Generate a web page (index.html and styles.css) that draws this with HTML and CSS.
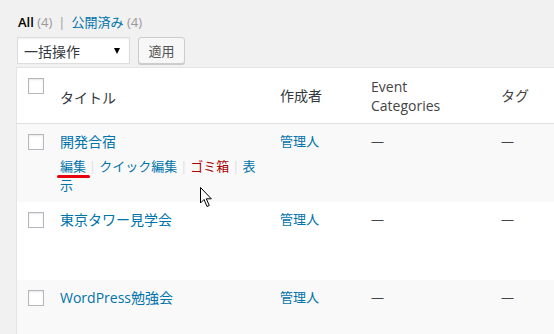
FILE: index.html
```html
<!DOCTYPE html>
<html lang="ja">
<head>
    <meta charset="UTF-8">
    <meta name="viewport" content="width=device-width, initial-scale=1.0">
    <title>投稿一覧</title>
    <link rel="stylesheet" href="styles.css">
</head>
<body>
    <div class="wrap">
        <ul class="subsubsub">
            <li class="current">All <span class="count">(4)</span></li>
            <li class="sep">|</li>
            <li><a href="#">公開済み</a> <span class="count">(4)</span></li>
        </ul>

        <div class="tablenav">
            <div class="bulk-select">
                <span>一括操作</span>
                <span class="arrow"></span>
            </div>
            <button class="button">適用</button>
        </div>

        <div class="posts">
            <div class="row head">
                <div class="cb"><span class="check"></span></div>
                <div class="col-title">タイトル</div>
                <div class="col-author">作成者</div>
                <div class="col-event">Event<br>Categories</div>
                <div class="col-tags">タグ</div>
            </div>

            <div class="row alt">
                <div class="cb"><span class="check"></span></div>
                <div class="col-title">
                    <a class="row-title" href="#">開発合宿</a>
                    <div class="row-actions">
                        <a class="edit" href="#">編集</a><span class="bar">|</span><a href="#">クイック編集</a><span class="bar">|</span><a class="trash" href="#">ゴミ箱</a><span class="bar">|</span><a href="#">表示</a>
                    </div>
                </div>
                <div class="col-author"><a href="#">管理人</a></div>
                <div class="col-event">—</div>
                <div class="col-tags">—</div>
            </div>

            <div class="row">
                <div class="cb"><span class="check"></span></div>
                <div class="col-title"><a class="row-title" href="#">東京タワー見学会</a></div>
                <div class="col-author"><a href="#">管理人</a></div>
                <div class="col-event">—</div>
                <div class="col-tags">—</div>
            </div>

            <div class="row alt">
                <div class="cb"><span class="check"></span></div>
                <div class="col-title"><a class="row-title" href="#">WordPress勉強会</a></div>
                <div class="col-author"><a href="#">管理人</a></div>
                <div class="col-event">—</div>
                <div class="col-tags">—</div>
            </div>
        </div>
    </div>

    <svg class="cursor" width="15" height="23" viewBox="0 0 15 23">
        <path d="M1.5 1.5 L1.5 17 L5 13.5 L8 20.5 L10.3 19.5 L7.3 12.8 L12.3 12.8 Z" fill="#fff" stroke="#000" stroke-width="1"/>
    </svg>
</body>
</html>
```

FILE: styles.css
```css
html, body {
    margin: 0;
    padding: 0;
    overflow: hidden;
}

body {
    background: #f1f1f1;
    color: #444;
    font-family: "Open Sans", "Noto Sans CJK JP", sans-serif;
    font-size: 13px;
    width: 554px;
    height: 334px;
    position: relative;
}

a {
    color: #0073aa;
    text-decoration: none;
}

.wrap {
    padding: 13px 0 0 16px;
    width: 580px;
}

.subsubsub {
    list-style: none;
    margin: 0 0 0 2px;
    padding: 0;
    display: flex;
    gap: 6px;
    height: 18px;
    line-height: 18px;
}

.subsubsub .current {
    color: #000;
    font-weight: 600;
}

.count {
    color: #999;
    font-weight: normal;
}

.sep {
    color: #999;
}

.tablenav {
    display: flex;
    gap: 8px;
    margin-top: 6px;
    height: 27px;
}

.bulk-select {
    box-sizing: border-box;
    width: 113px;
    height: 27px;
    margin-left: 1px;
    background: #fff;
    border: 1px solid #ddd;
    box-shadow: inset 0 1px 2px rgba(0, 0, 0, 0.07);
    display: flex;
    align-items: center;
    justify-content: space-between;
    padding: 0 9px 0 6px;
    font-size: 14px;
    color: #32373c;
}

.arrow {
    width: 0;
    height: 0;
    border-left: 3px solid transparent;
    border-right: 3px solid transparent;
    border-top: 6px solid #000;
}

.button {
    box-sizing: border-box;
    height: 27px;
    width: 47px;
    padding: 0;
    background: #f7f7f7;
    border: 1px solid #ccc;
    border-radius: 3px;
    box-shadow: 0 1px 0 #ccc;
    color: #555;
    font-family: inherit;
    font-size: 13px;
}

.posts {
    margin-top: 3px;
    background: #fff;
    border: 1px solid #e5e5e5;
    border-right: none;
    box-shadow: 0 1px 1px rgba(0, 0, 0, 0.04);
}

.row {
    display: grid;
    grid-template-columns: 33px 220px 91px 130px 1fr;
    height: 78px;
    box-sizing: border-box;
    font-size: 13px;
    line-height: 19px;
}

.row > div {
    padding: 8px 10px 0;
}

.row.alt {
    background: #f9f9f9;
}

.row .cb {
    padding: 10px 0 0 11px;
}

.check {
    display: block;
    box-sizing: border-box;
    width: 16px;
    height: 16px;
    background: #fff;
    border: 1px solid #b4b9be;
    box-shadow: inset 0 1px 2px rgba(0, 0, 0, 0.1);
}

.row.head {
    height: 56px;
    border-bottom: 1px solid #e1e1e1;
    align-items: center;
    font-size: 14px;
    color: #32373c;
}

.row.head > div {
    padding-top: 0;
}

.row.head .cb {
    align-self: start;
    padding-top: 10px;
}

.row.head .col-title {
    padding-top: 4px;
}

.row-title {
    font-size: 14px;
}

.row-actions {
    margin-top: 5px;
    font-size: 13px;
}

.row-actions .bar {
    color: #ddd;
    margin: 0 3px;
}

/* red hand-drawn mark under 編集 */
.row-actions .edit {
    position: relative;
}

.row-actions .edit::after {
    content: "";
    position: absolute;
    left: -3px;
    right: -4px;
    bottom: -3px;
    height: 3px;
    border-radius: 2px;
    background: #e8000b;
}

.row-actions .trash {
    color: #a00;
}

.col-event, .col-tags {
    color: #444;
}

.cursor {
    position: absolute;
    left: 199px;
    top: 186px;
}
```
